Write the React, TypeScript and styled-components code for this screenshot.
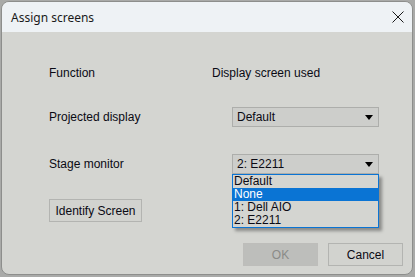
import React from "react";
import styled, { createGlobalStyle } from "styled-components";

const Global = createGlobalStyle`
  html, body { margin: 0; padding: 0; background: #a9aaa8; }
  body { width: 415px; height: 277px; overflow: hidden; }
`;

const Window = styled.div`
  margin: 1px 0 0 1px;
  width: 410px;
  height: 272px;
  border: 1px solid #8d8e8c;
  border-radius: 8px;
  overflow: hidden;
  background: #d4d5d1;
  display: flex;
  flex-direction: column;
  font-family: "Liberation Sans", Arial, sans-serif;
  font-size: 12px;
  color: #0a0a14;
`;

const TitleBar = styled.div`
  height: 30px;
  flex: none;
  background: #eef2f5;
  display: flex;
  align-items: center;
  justify-content: space-between;
  padding: 0 8px 0 9px;
  font-family: "Noto Sans", "Open Sans", sans-serif;
  font-size: 12px;
  color: #1a1a1a;
`;

const Body = styled.div`
  position: relative;
  flex: 1;
  padding: 31px 0 0 47px;
  display: flex;
  flex-direction: column;
`;

const Row = styled.div<{ $top: number; $h?: number }>`
  display: flex;
  align-items: center;
  margin-top: ${(p) => p.$top}px;
  height: ${(p) => p.$h ?? 20}px;
`;

const Label = styled.div<{ $w: number }>`
  width: ${(p) => p.$w}px;
  flex: none;
`;

const Combo = styled.div`
  position: relative;
  width: 147px;
  height: 20px;
  box-sizing: border-box;
  border: 1px solid #adaeab;
  background: #cdcecb;
  display: flex;
  align-items: center;
  justify-content: space-between;
  padding: 0 4px 0 4px;
`;

const Arrow = styled.span`
  width: 0;
  height: 0;
  border-left: 4px solid transparent;
  border-right: 4px solid transparent;
  border-top: 5px solid #000;
  margin-right: 1px;
`;

const List = styled.div`
  position: absolute;
  left: -1px;
  top: 19px;
  width: 147px;
  box-sizing: border-box;
  border: 1px solid #0a74d4;
  background: #d4d5d1;
  box-shadow: 3px 3px 3px rgba(0, 0, 0, 0.35);
  z-index: 2;
`;

const Item = styled.div<{ $sel?: boolean }>`
  height: 13px;
  line-height: 13px;
  padding-left: 1px;
  background: ${(p) => (p.$sel ? "#0a74d4" : "transparent")};
  color: ${(p) => (p.$sel ? "#fff" : "#0a0a14")};
`;

const Button = styled.div<{ $w: number; $disabled?: boolean }>`
  width: ${(p) => p.$w}px;
  height: 23px;
  box-sizing: border-box;
  border: 1px solid ${(p) => (p.$disabled ? "#bdbdba" : "#b3b4b1")};
  background: ${(p) => (p.$disabled ? "#bdbebb" : "#d2d3cf")};
  color: ${(p) => (p.$disabled ? "#8a8b88" : "#0a0a14")};
  display: flex;
  align-items: center;
  justify-content: center;
  flex: none;
`;

const Footer = styled.div`
  display: flex;
  justify-content: flex-end;
  gap: 10px;
  margin-top: 21px;
  padding-right: 9px;
`;

const Close = () => (
  <svg width="12" height="12" viewBox="0 0 12 12">
    <path d="M0.5 0.5 L11.5 11.5 M11.5 0.5 L0.5 11.5" stroke="#1a1a1a" strokeWidth="1" fill="none" />
  </svg>
);

export default function App() {
  return (
    <>
      <Global />
      <Window>
        <TitleBar>
          <span>Assign screens</span>
          <Close />
        </TitleBar>
        <Body>
          <Row $top={0}>
            <Label $w={163}>Function</Label>
            <span>Display screen used</span>
          </Row>
          <Row $top={24}>
            <Label $w={183}>Projected display</Label>
            <Combo>
              <span>Default</span>
              <Arrow />
            </Combo>
          </Row>
          <Row $top={27}>
            <Label $w={183}>Stage monitor</Label>
            <Combo>
              <span>2: E2211</span>
              <Arrow />
              <List>
                <Item>Default</Item>
                <Item $sel>None</Item>
                <Item>1: Dell AIO</Item>
                <Item>2: E2211</Item>
              </List>
            </Combo>
          </Row>
          <Row $top={25} $h={23}>
            <Button $w={93}>Identify Screen</Button>
          </Row>
          <Footer>
            <Button $w={75} $disabled>OK</Button>
            <Button $w={75}>Cancel</Button>
          </Footer>
        </Body>
      </Window>
    </>
  );
}
